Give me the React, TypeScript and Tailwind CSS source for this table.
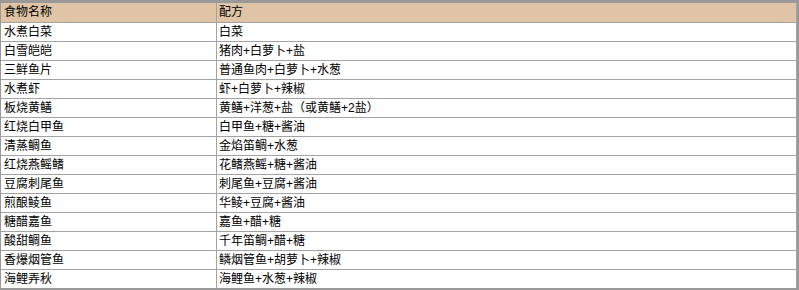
const rows: [string, string][] = [
  ['水煮白菜', '白菜'],
  ['白雪皑皑', '猪肉+白萝卜+盐'],
  ['三鲜鱼片', '普通鱼肉+白萝卜+水葱'],
  ['水煮虾', '虾+白萝卜+辣椒'],
  ['板烧黄鳝', '黄鳝+洋葱+盐（或黄鳝+2盐）'],
  ['红烧白甲鱼', '白甲鱼+糖+酱油'],
  ['清蒸鲷鱼', '金焰笛鲷+水葱'],
  ['红烧燕鳐鳍', '花鳍燕鳐+糖+酱油'],
  ['豆腐刺尾鱼', '刺尾鱼+豆腐+酱油'],
  ['煎酿鲮鱼', '华鲮+豆腐+酱油'],
  ['糖醋嘉鱼', '嘉鱼+醋+糖'],
  ['酸甜鲷鱼', '千年笛鲷+醋+糖'],
  ['香爆烟管鱼', '鳞烟管鱼+胡萝卜+辣椒'],
  ['海鲤弄秋', '海鲤鱼+水葱+辣椒'],
];

export default function App() {
  return (
    <div
      className="w-[799px] h-[290px] bg-white border-[#999999] border-t-[3px] border-l border-r-2 border-b-2 text-[12px] text-black"
      style={{ fontFamily: '"Liberation Sans", "Noto Sans CJK SC", sans-serif' }}
    >
      <div className="grid grid-cols-[216px_1fr]">
        <div className="h-[20px] leading-[19px] pl-[3px] bg-[#dfc5a5] border-r border-b border-[#a3a3a3]">
          食物名称
        </div>
        <div className="h-[20px] leading-[19px] pl-[2px] bg-[#dfc5a5] border-r border-b border-[#a3a3a3]">
          配方
        </div>
        {rows.map(([name, recipe], i) => {
          const last = i === rows.length - 1;
          return [
            <div
              key={name + 'a'}
              className={`leading-[18px] pl-[3px] border-r border-[#a3a3a3] ${last ? 'h-[18px]' : 'h-[19px] border-b'}`}
            >
              {name}
            </div>,
            <div
              key={name + 'b'}
              className={`leading-[18px] pl-[2px] border-r border-[#a3a3a3] ${last ? 'h-[18px]' : 'h-[19px] border-b'}`}
            >
              {recipe}
            </div>,
          ];
        })}
      </div>
    </div>
  );
}
